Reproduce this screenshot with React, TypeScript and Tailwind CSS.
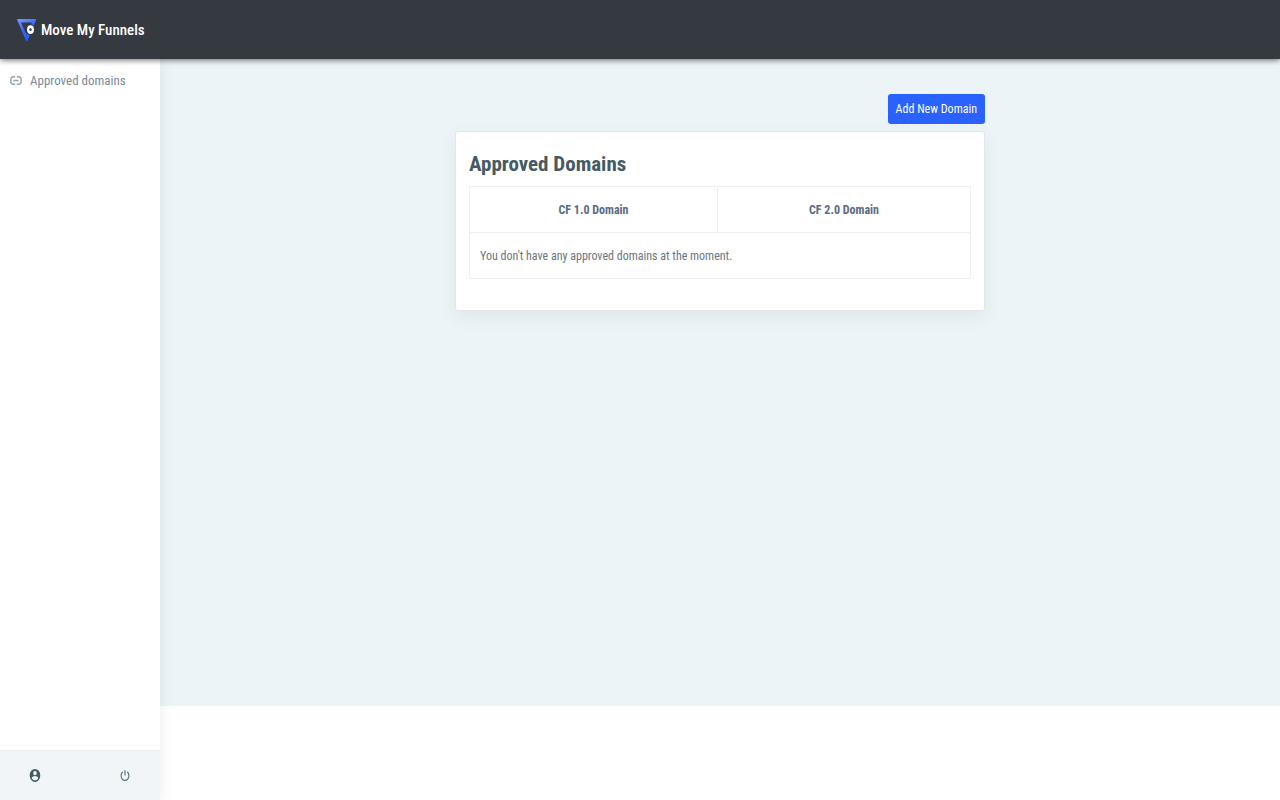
import React from "react";

interface NavItem {
  label: string;
  href: string;
}

const navItems: NavItem[] = [{ label: "Approved domains", href: "#domains" }];

const LogoIcon: React.FC = () => (
  <svg className="w-5 h-6" viewBox="0 0 20 24" aria-hidden="true">
    <defs>
      <linearGradient id="logo" x1="0" y1="0" x2="0.5" y2="1">
        <stop offset="0" stopColor="#7d9cff" />
        <stop offset="0.5" stopColor="#3e68fb" />
        <stop offset="1" stopColor="#2458ff" />
      </linearGradient>
    </defs>
    <path
      fill="url(#logo)"
      fillRule="evenodd"
      d="M.9 1h17.500q1 0 .7 1L10.600 22.500q-.8 1.400-1.700 0L.2 2Q0 1 .9 1ZM4 4.500 9.500 16.500 15 4.500Z"
    />
    <ellipse cx="13.500" cy="11.600" rx="4.500" ry="5.600" fill="#343a40" />
    <ellipse cx="13.500" cy="11.600" rx="3.500" ry="4.400" fill="#fff" />
    <ellipse cx="13.500" cy="11.600" rx="1.200" ry="1.500" fill="#343a7a" />
  </svg>
);

const LinkIcon: React.FC = () => (
  <svg
    className="w-3 h-3"
    viewBox="0 0 12 12"
    fill="none"
    stroke="currentColor"
    strokeWidth="1.4"
    aria-hidden="true"
  >
    <path d="M5.200 1.700H3.700Q.7 1.700 .7 5.500T3.700 9.300H5.200M6.800 1.700H8.300Q11.300 1.700 11.300 5.500T8.300 9.300H6.800M3.500 5.500H8.500" />
  </svg>
);

const AccountIcon: React.FC = () => (
  <svg className="w-3 h-4" viewBox="0 0 12 16" aria-hidden="true">
    <path
      fill="currentColor"
      fillRule="evenodd"
      d="M6 .9a5.300 6.500 0 1 0 0 13a5.300 6.500 0 1 0 0-13ZM6 2.900a1.800 2.200 0 1 1 0 4.400a1.800 2.200 0 1 1 0-4.400ZM6 12.300c-1.500 0-2.600-.8-3.300-2.300c.1-1.300 2.200-2 3.300-2s3.200.7 3.300 2C8.600 11.500 7.500 12.300 6 12.300Z"
    />
  </svg>
);

const PowerIcon: React.FC = () => (
  <svg
    className="w-2.5 h-3"
    viewBox="0 0 10 12"
    fill="none"
    stroke="currentColor"
    strokeWidth="1.2"
    aria-hidden="true"
  >
    <path d="M2.800 1.800A3.900 4.700 0 1 0 7.200 1.800M5 .2V5.600" />
  </svg>
);

const Header: React.FC = () => (
  <header className="relative z-20 shrink-0 h-[59px] px-[17px] flex items-center bg-[#343a40] shadow-[0_1px_6px_rgba(0,0,0,0.6)]">
    <a href="#home" className="flex items-center gap-1 text-white">
      <LogoIcon />
      <span className="text-[15px] leading-5 font-medium">Move My Funnels</span>
    </a>
  </header>
);

const Sidebar: React.FC = () => (
  <aside className="relative z-10 w-40 shrink-0 flex flex-col bg-white shadow-[0_0_14px_rgba(60,75,90,0.1)]">
    <nav className="flex-1 pt-3">
      {navItems.map((item) => (
        <a
          key={item.label}
          href={item.href}
          className="flex items-center gap-2 px-2.5 text-[13px] leading-5 text-[#7b8a9c]"
        >
          <span className="text-[#90a4ae]">
            <LinkIcon />
          </span>
          {item.label}
        </a>
      ))}
    </nav>
    {/* Account and sign out */}
    <div className="h-[50px] flex items-center border-t border-[#e9edf0] bg-[#f1f5f8] text-[#455a64]">
      <button type="button" aria-label="Account" className="w-[70px] flex justify-center">
        <AccountIcon />
      </button>
      <button type="button" aria-label="Sign out" className="ml-auto w-[70px] flex justify-center text-[#607580]">
        <PowerIcon />
      </button>
    </div>
  </aside>
);

const DomainsCard: React.FC = () => (
  <section className="rounded-[3px] border border-[#e0e6ea] bg-white px-[13px] pt-[19px] pb-[31px] shadow-[0_6px_18px_rgba(60,80,90,0.08)]">
    <h1 className="mb-[9px] text-[21px] leading-[26px] font-bold text-[#455a64]">Approved Domains</h1>
    <table className="w-full table-fixed border-collapse text-xs leading-5">
      <thead>
        <tr>
          <th
            scope="col"
            className="w-[248px] border border-[#edf0f2] px-2.5 pt-[13px] pb-3 text-center font-bold text-[#5b6b82]"
          >
            CF 1.0 Domain
          </th>
          <th
            scope="col"
            className="border border-[#edf0f2] px-2.5 pt-[13px] pb-3 text-center font-bold text-[#5b6b82]"
          >
            CF 2.0 Domain
          </th>
        </tr>
      </thead>
      <tbody>
        <tr>
          <td colSpan={2} className="border border-[#edf0f2] px-2.5 pt-[13px] pb-3 text-[#6b757e]">
            You don't have any approved domains at the moment.
          </td>
        </tr>
      </tbody>
    </table>
  </section>
);

export default function App() {
  return (
    <div className="min-h-screen flex flex-col bg-white font-['Roboto_Condensed','Roboto',sans-serif]">
      <Header />
      <div className="flex-1 flex">
        <Sidebar />
        <main className="flex-1 mb-[94px] px-4 pt-[35px] bg-[#ecf4f7]">
          <div className="mx-auto w-full max-w-[530px]">
            <div className="mb-[7px] flex justify-end">
              <button
                type="button"
                className="h-[30px] rounded-[3px] bg-[#2962ff] px-2 text-xs text-white"
              >
                Add New Domain
              </button>
            </div>
            <DomainsCard />
          </div>
        </main>
      </div>
    </div>
  );
}
